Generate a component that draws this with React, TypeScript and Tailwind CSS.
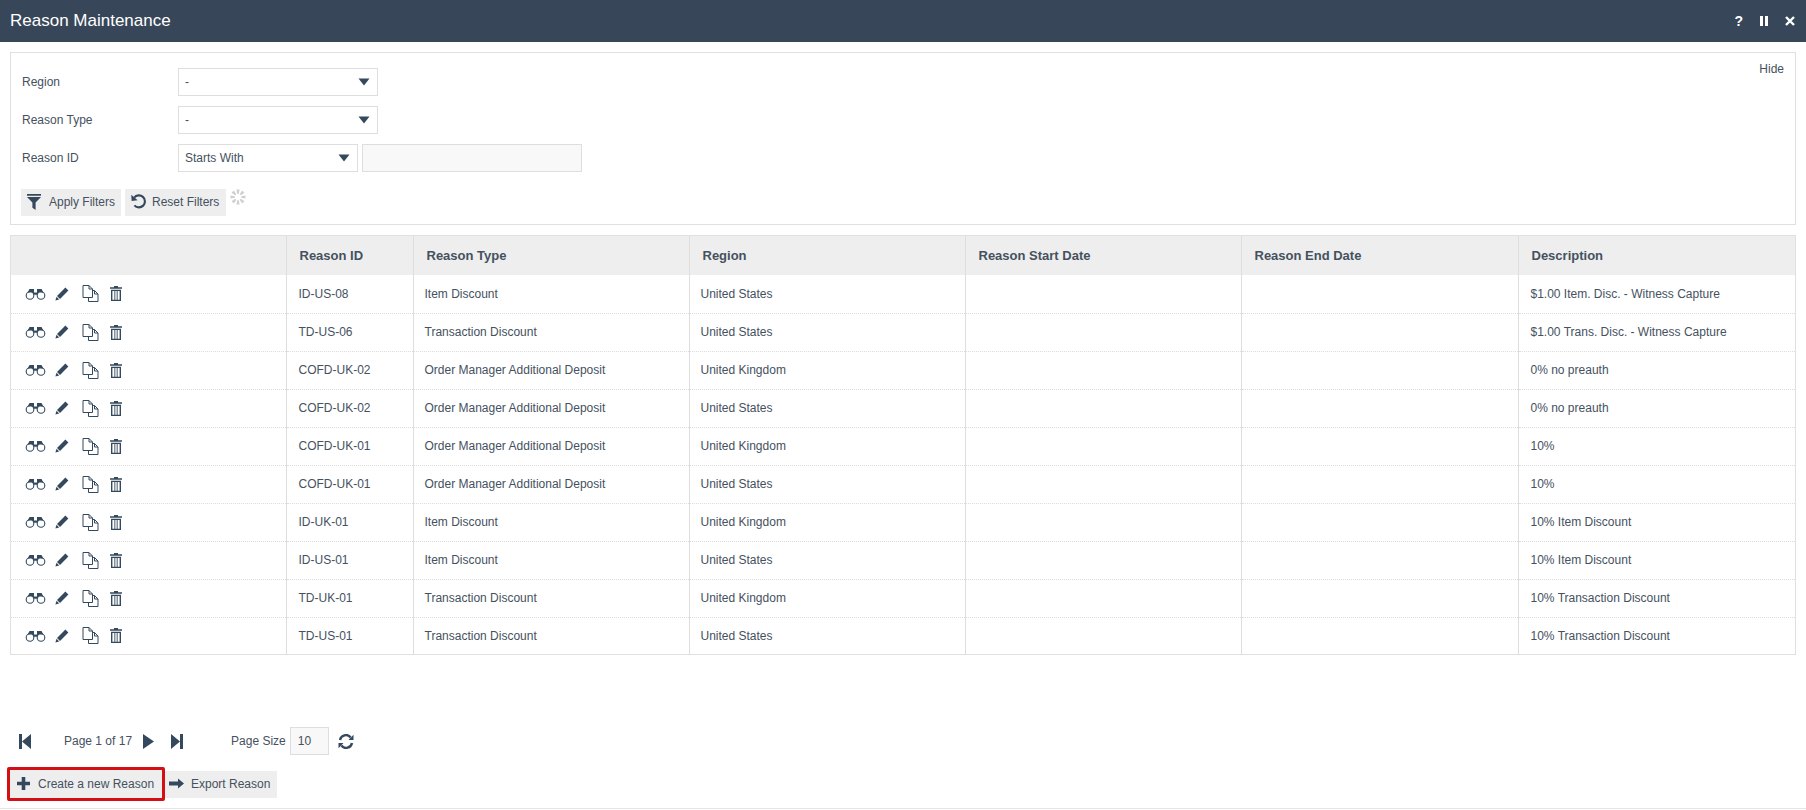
import React from "react";

const rows = [
  ["ID-US-08", "Item Discount", "United States", "$1.00 Item. Disc. - Witness Capture"],
  ["TD-US-06", "Transaction Discount", "United States", "$1.00 Trans. Disc. - Witness Capture"],
  ["COFD-UK-02", "Order Manager Additional Deposit", "United Kingdom", "0% no preauth"],
  ["COFD-UK-02", "Order Manager Additional Deposit", "United States", "0% no preauth"],
  ["COFD-UK-01", "Order Manager Additional Deposit", "United Kingdom", "10%"],
  ["COFD-UK-01", "Order Manager Additional Deposit", "United States", "10%"],
  ["ID-UK-01", "Item Discount", "United Kingdom", "10% Item Discount"],
  ["ID-US-01", "Item Discount", "United States", "10% Item Discount"],
  ["TD-UK-01", "Transaction Discount", "United Kingdom", "10% Transaction Discount"],
  ["TD-US-01", "Transaction Discount", "United States", "10% Transaction Discount"],
];

const C = "#34495e";

const Binoculars = () => (
  <svg width="21" height="12" viewBox="0 0 21 12" fill="none">
    <circle cx="5" cy="7.5" r="3.8" stroke={C} strokeWidth="1.1" />
    <circle cx="16" cy="7.5" r="3.8" stroke={C} strokeWidth="1.1" />
    <path d="M2.5 4.8 L4.5 1 H9 V4.5 H12 V1 H16.5 L18.5 4.8 L14 4 L12 6.8 H9 L7 4 Z" fill={C} />
  </svg>
);
const Pencil = () => (
  <svg width="14" height="14" viewBox="0 0 14 14">
    <path d="M10.4 0.6 L13.4 3.6 L5 12 L2 9 Z" fill={C} />
    <path d="M1.5 9.8 L4.2 12.5 L0.4 13.6 Z" fill={C} />
  </svg>
);
const Copy = () => (
  <svg width="17" height="17" viewBox="0 0 17 17" fill="none" stroke={C} strokeWidth="1">
    <path d="M1 0.5 H7 L10.5 4 V12.5 H1 Z" fill="#fff" />
    <path d="M7 0.5 V4 H10.5" />
    <path d="M10.5 5.5 H12.5 L16 9 V16.5 H6.5 V12.5" />
    <path d="M12.5 5.5 V9 H16" />
  </svg>
);
const Trash = () => (
  <svg width="12" height="15" viewBox="0 0 12 15">
    <path d="M4 0 H8 V1.2 H12 V2.8 H0 V1.2 H4 Z" fill={C} />
    <path d="M1 3.8 H11 V15 H1 Z M2.4 5 V13.8 H4.4 V5 Z M5.3 5 V13.8 H6.7 V5 Z M7.6 5 V13.8 H9.6 V5 Z" fill={C} fillRule="evenodd" />
  </svg>
);
const Caret = () => (
  <svg width="12" height="8" viewBox="0 0 12 8"><path d="M0.5 0.5 H11.5 L6 7.5 Z" fill={C} /></svg>
);
const Funnel = () => (
  <svg width="14" height="16" viewBox="0 0 14 16">
    <path d="M0 0 H14 V1.8 H0 Z M0 3 H14 L8.6 8.6 V16 L5.4 13.8 V8.6 Z" fill={C} />
  </svg>
);
const Undo = () => (
  <svg width="15" height="15" viewBox="0 0 14 14" fill="none">
    <path d="M3 3.4 A5.6 5.6 0 1 1 3.2 10.6" stroke={C} strokeWidth="2" />
    <path d="M0.2 0.8 L0.6 6.6 L6.2 5.8 Z" fill={C} />
  </svg>
);
const Spinner = () => (
  <svg width="16" height="16" viewBox="0 0 16 16" fill="#cfcfcf">
    {[0, 45, 90, 135, 180, 225, 270, 315].map((a) => (
      <path key={a} d="M6.4 0.5 H9.6 L8.8 4.8 H7.2 Z" transform={`rotate(${a} 8 8)`} />
    ))}
  </svg>
);
const First = () => (
  <svg width="12" height="15" viewBox="0 0 12 15"><path d="M0 0 H3 V15 H0 Z M12 0 V15 L3 7.5 Z" fill={C} /></svg>
);
const Last = () => (
  <svg width="12" height="15" viewBox="0 0 12 15"><path d="M9 0 H12 V15 H9 Z M0 0 V15 L9 7.5 Z" fill={C} /></svg>
);
const Play = () => (
  <svg width="11" height="15" viewBox="0 0 11 15"><path d="M0 0 V15 L11 7.5 Z" fill={C} /></svg>
);
const Refresh = () => (
  <svg width="16" height="15" viewBox="0 0 16 15" fill="none">
    <path d="M2 6 A6 6 0 0 1 12.6 3.4" stroke={C} strokeWidth="2.4" />
    <path d="M14 9 A6 6 0 0 1 3.4 11.6" stroke={C} strokeWidth="2.4" />
    <path d="M15.5 0.8 V6 H10.5 Z" fill={C} />
    <path d="M0.5 14.2 V9 H5.5 Z" fill={C} />
  </svg>
);
const Plus = () => (
  <svg width="13" height="13" viewBox="0 0 13 13"><path d="M4.7 0 H8.3 V4.7 H13 V8.3 H8.3 V13 H4.7 V8.3 H0 V4.7 H4.7 Z" fill={C} /></svg>
);
const Arrow = () => (
  <svg width="15" height="11" viewBox="0 0 15 11"><path d="M0 3.6 H9 V0.5 L15 5.5 L9 10.5 V7.4 H0 Z" fill={C} /></svg>
);

function Select({ label, w }: { label: string; w: string }) {
  return (
    <div className={`${w} h-[28px] border border-[#dedede] bg-white flex items-center justify-between pl-[6px] pr-[7px] text-[12px]`}>
      <span>{label}</span>
      <Caret />
    </div>
  );
}

function FilterRow({ label, children }: { label: string; children: React.ReactNode }) {
  return (
    <div className="flex items-center h-[28px]">
      <div className="w-[167px] pl-[11px] text-[12px]">{label}</div>
      {children}
    </div>
  );
}

const colgroup = (
  <colgroup>
    <col className="w-[275px]" />
    <col className="w-[127px]" />
    <col className="w-[276px]" />
    <col className="w-[276px]" />
    <col className="w-[276px]" />
    <col className="w-[277px]" />
    <col />
  </colgroup>
);

export default function App() {
  return (
    <div className="w-[1806px] h-[810px] bg-white overflow-hidden text-[#45515e] font-['Liberation_Sans',Arial,sans-serif] flex flex-col">
      <header className="h-[42px] shrink-0 bg-[#374759] flex items-center justify-between pl-[10px] pr-[11px] text-white">
        <h1 className="text-[17px] font-normal pb-[1px]">Reason Maintenance</h1>
        <div className="flex items-center gap-[17px] text-[14px] font-bold">
          <span>?</span>
          <svg width="8" height="10" viewBox="0 0 8 10"><path d="M0 0 H3 V10 H0 Z M5 0 H8 V10 H5 Z" fill="#fff" /></svg>
          <svg width="10" height="10" viewBox="0 0 10 10"><path d="M1 1 L9 9 M9 1 L1 9" stroke="#fff" strokeWidth="2.4" /></svg>
        </div>
      </header>

      <section className="relative mx-[10px] mt-[10px] h-[173px] shrink-0 border border-[#e0e0e0] pt-[15px]">
        <span className="absolute right-[11px] top-[7px] text-[12px]">Hide</span>
        <div className="flex flex-col gap-[10px]">
          <FilterRow label="Region"><Select label="-" w="w-[200px]" /></FilterRow>
          <FilterRow label="Reason Type"><Select label="-" w="w-[200px]" /></FilterRow>
          <FilterRow label="Reason ID">
            <Select label="Starts With" w="w-[180px]" />
            <div className="ml-[4px] w-[220px] h-[28px] border border-[#dedede] bg-[#f8f8f8]" />
          </FilterRow>
        </div>
        <div className="flex items-start mt-[17px] ml-[10px] text-[12px]">
          <button className="h-[27px] w-[100px] bg-[#eeeeee] flex items-center pl-[6px] pb-[2px] gap-[8px]"><Funnel />Apply Filters</button>
          <button className="ml-[4px] h-[27px] w-[101px] bg-[#eeeeee] flex items-center pl-[6px] pb-[2px] gap-[6px]"><Undo />Reset Filters</button>
          <span className="ml-[4px]"><Spinner /></span>
        </div>
      </section>

      <section className="mx-[10px] mt-[10px] shrink-0 border border-[#e0e0e0]">
        <table className="w-full table-fixed border-collapse text-[12px]">
          {colgroup}
          <thead>
            <tr className="h-[39px] bg-[#eeeeee] text-[13px]">
              <th className="border-r border-[#dedede]" />
              {["Reason ID", "Reason Type", "Region", "Reason Start Date", "Reason End Date", "Description"].map((h, i) => (
                <th key={h} className={`text-left font-bold pl-[13px] ${i < 5 ? "border-r border-[#dedede]" : ""}`}>{h}</th>
              ))}
            </tr>
          </thead>
          <tbody>
            {rows.map((r, i) => (
              <tr key={i} className={i < 9 ? "h-[38px] border-b border-dotted border-[#dcdcdc]" : "h-[37px]"}>
                <td className="border-r border-[#dedede] pl-[14px]">
                  <div className="flex items-center">
                    <Binoculars />
                    <span className="ml-[9px]"><Pencil /></span>
                    <span className="ml-[13px]"><Copy /></span>
                    <span className="ml-[11px]"><Trash /></span>
                  </div>
                </td>
                <td className="border-r border-[#dedede] pl-[12px]">{r[0]}</td>
                <td className="border-r border-[#dedede] pl-[11px]">{r[1]}</td>
                <td className="border-r border-[#dedede] pl-[11px]">{r[2]}</td>
                <td className="border-r border-[#dedede]" />
                <td className="border-r border-[#dedede]" />
                <td className="pl-[12px]">{r[3]}</td>
              </tr>
            ))}
          </tbody>
        </table>
      </section>

      <div className="flex items-center h-[28px] mt-[72px] text-[12px] shrink-0">
        <span className="ml-[19px]"><First /></span>
        <span className="ml-[33px]">Page 1 of 17</span>
        <span className="ml-[11px]"><Play /></span>
        <span className="ml-[17px]"><Last /></span>
        <span className="ml-[48px]">Page Size</span>
        <div className="ml-[4px] w-[39px] h-[28px] border border-[#dedede] bg-[#f8f8f8] flex items-center pl-[7px]">10</div>
        <span className="ml-[9px]"><Refresh /></span>
      </div>

      <div className="flex items-center mt-[12px] ml-[7px] text-[12px] shrink-0">
        <button className="h-[34px] w-[158px] border-[3px] border-[#d40f14] rounded-[2px] bg-[#eeeeee] flex items-center pl-[7px] pb-[1px] gap-[8px]"><Plus />Create a new Reason</button>
        <button className="h-[27px] w-[112px] bg-[#eeeeee] flex items-center pl-[4px] pb-[1px] gap-[7px]"><Arrow />Export Reason</button>
      </div>
      <div className="mt-[7px] h-px bg-[#e5e5e5] shrink-0" />
    </div>
  );
}
